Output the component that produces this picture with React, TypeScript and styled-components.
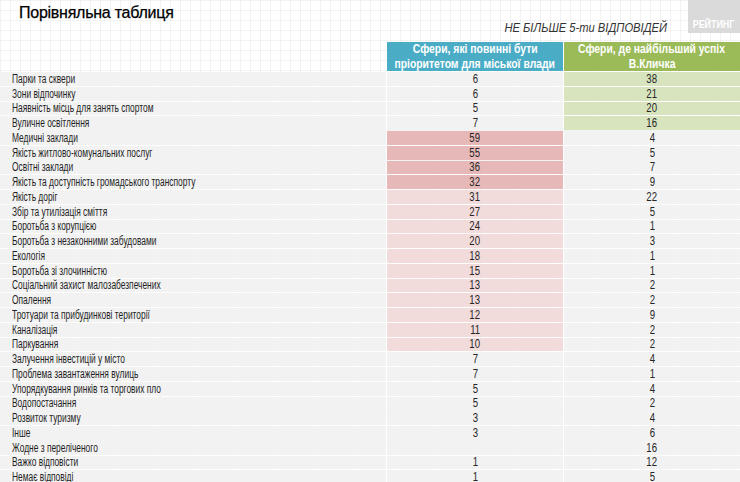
import React from "react";
import styled, { createGlobalStyle } from "styled-components";

const GlobalStyle = createGlobalStyle`
  html, body {
    margin: 0;
    padding: 0;
    background: #ffffff;
  }
  body {
    font-family: "Liberation Sans", Arial, sans-serif;
  }
`;

type Tone = "plain" | "strong" | "soft" | "green";

type RowType = {
  label: string;
  priority: string;
  success: string;
  priorityTone?: Tone;
  successTone?: Tone;
};

const rows: RowType[] = [
  { label: "Парки та сквери", priority: "6", success: "38", successTone: "green" },
  { label: "Зони відпочинку", priority: "6", success: "21", successTone: "green" },
  { label: "Наявність місць для занять спортом", priority: "5", success: "20", successTone: "green" },
  { label: "Вуличне освітлення", priority: "7", success: "16", successTone: "green" },
  { label: "Медичні заклади", priority: "59", success: "4", priorityTone: "strong" },
  { label: "Якість житлово-комунальних послуг", priority: "55", success: "5", priorityTone: "strong" },
  { label: "Освітні заклади", priority: "36", success: "7", priorityTone: "strong" },
  { label: "Якість та доступність громадського транспорту", priority: "32", success: "9", priorityTone: "strong" },
  { label: "Якість доріг", priority: "31", success: "22", priorityTone: "soft" },
  { label: "Збір та утилізація сміття", priority: "27", success: "5", priorityTone: "soft" },
  { label: "Боротьба з корупцією", priority: "24", success: "1", priorityTone: "soft" },
  { label: "Боротьба з незаконними забудовами", priority: "20", success: "3", priorityTone: "soft" },
  { label: "Екологія", priority: "18", success: "1", priorityTone: "soft" },
  { label: "Боротьба зі злочинністю", priority: "15", success: "1", priorityTone: "soft" },
  { label: "Соціальний захист малозабезпечених", priority: "13", success: "2", priorityTone: "soft" },
  { label: "Опалення", priority: "13", success: "2", priorityTone: "soft" },
  { label: "Тротуари та прибудинкові території", priority: "12", success: "9", priorityTone: "soft" },
  { label: "Каналізація", priority: "11", success: "2", priorityTone: "soft" },
  { label: "Паркування", priority: "10", success: "2", priorityTone: "soft" },
  { label: "Залучення інвестицій у місто", priority: "7", success: "4" },
  { label: "Проблема завантаження вулиць", priority: "7", success: "1" },
  { label: "Упорядкування ринків та торгових пло", priority: "5", success: "4" },
  { label: "Водопостачання", priority: "5", success: "2" },
  { label: "Розвиток туризму", priority: "3", success: "4" },
  { label: "Інше", priority: "3", success: "6" },
  { label: "Жодне з переліченого", priority: "", success: "16" },
  { label: "Важко відповісти", priority: "1", success: "12" },
  { label: "Немає відповіді", priority: "1", success: "5" },
];

const toneColors: Record<Tone, string> = {
  plain: "#f2f2f2",
  strong: "#e6b9b8",
  soft: "#f2dcdb",
  green: "#d7e4bd",
};

// the slide uses a narrow face; squeeze the regular one to its widths
const Narrow = styled.span<{ $scale: number; $origin?: string }>`
  display: inline-block;
  white-space: nowrap;
  transform: scaleX(${(p) => p.$scale});
  transform-origin: ${(p) => p.$origin ?? "center"} center;
`;

const Page = styled.div`
  width: 740px;
  height: 482px;
  overflow: hidden;
  background-color: #ffffff;
  background-image: linear-gradient(rgba(225, 225, 225, 0.4) 1px, transparent 1px),
    linear-gradient(90deg, rgba(225, 225, 225, 0.4) 1px, transparent 1px);
  background-size: 10px 10px;
`;

const TopBar = styled.div`
  height: 42px;
  display: flex;
  justify-content: space-between;
  align-items: flex-start;
`;

const Title = styled.h1`
  margin: 4px 0 0 19px;
  font-size: 16px;
  font-weight: 400;
  color: #000000;
  letter-spacing: -0.25px;
  -webkit-text-stroke: 0.25px #000000;
`;

const TopRight = styled.div`
  display: flex;
  align-items: flex-start;
  height: 100%;
`;

const Note = styled.div`
  margin: 20px 21px 0 0;
  font-size: 13px;
  font-style: italic;
  color: #333333;
`;

const Rating = styled.div`
  width: 52px;
  height: 33px;
  background: #dadada;
  color: #ffffff;
  font-size: 10.5px;
  font-weight: 700;
  display: flex;
  align-items: flex-end;
  justify-content: center;
  padding-bottom: 3px;
  box-sizing: border-box;
`;

const Table = styled.div`
  display: flex;
  flex-direction: column;
  gap: 1px;
`;

const Row = styled.div<{ $head?: boolean }>`
  display: grid;
  grid-template-columns: 386px 176px 176px;
  column-gap: 1px;
  height: ${(p) => (p.$head ? "29px" : "13.75px")};
  background: ${(p) => (p.$head ? "transparent" : "#ffffff")};
`;

const Label = styled.div`
  background: #f2f2f2;
  padding-left: 12px;
  font-size: 12px;
  color: #1f1f1f;
  display: flex;
  align-items: center;
  overflow: hidden;
`;

const Value = styled.div<{ $tone: Tone }>`
  background: ${(p) => toneColors[p.$tone]};
  font-size: 12px;
  color: #262626;
  display: flex;
  align-items: center;
  justify-content: center;
  overflow: hidden;
`;

const HeadCell = styled.div<{ $color: string }>`
  background: ${(p) => p.$color};
  color: #ffffff;
  font-size: 12.5px;
  font-weight: 700;
  line-height: 15px;
  display: flex;
  flex-direction: column;
  align-items: center;
  justify-content: center;
  overflow: hidden;
`;

const Spacer = styled.div``;

const App: React.FC = () => {
  return (
    <Page>
      <GlobalStyle />
      <TopBar>
        <Title>Порівняльна таблиця</Title>
        <TopRight>
          <Note>
            <Narrow $scale={0.86} $origin="right">
              НЕ БІЛЬШЕ 5-ти ВІДПОВІДЕЙ
            </Narrow>
          </Note>
          <Rating>
            <Narrow $scale={0.85}>РЕЙТИНГ</Narrow>
          </Rating>
        </TopRight>
      </TopBar>
      <Table>
        <Row $head>
          <Spacer />
          <HeadCell $color="#4bacc6">
            <Narrow $scale={0.83}>Сфери, які повинні бути</Narrow>
            <Narrow $scale={0.83}>пріоритетом для міської влади</Narrow>
          </HeadCell>
          <HeadCell $color="#9bbb59">
            <Narrow $scale={0.83}>Сфери, де найбільший успіх</Narrow>
            <Narrow $scale={0.83}>В.Кличка</Narrow>
          </HeadCell>
        </Row>
        {rows.map((r) => (
          <Row key={r.label}>
            <Label>
              <Narrow $scale={0.7} $origin="left">
                {r.label}
              </Narrow>
            </Label>
            <Value $tone={r.priorityTone ?? "plain"}>
              <Narrow $scale={0.8}>{r.priority}</Narrow>
            </Value>
            <Value $tone={r.successTone ?? "plain"}>
              <Narrow $scale={0.8}>{r.success}</Narrow>
            </Value>
          </Row>
        ))}
      </Table>
    </Page>
  );
};

export default App;
